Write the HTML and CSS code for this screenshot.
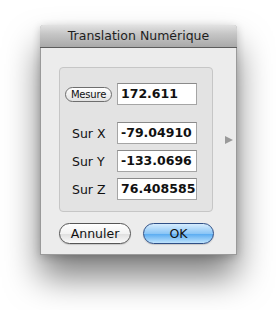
FILE: index.html
```html
<!DOCTYPE html>
<html lang="fr">

<head>
    <meta charset="UTF-8">
    <meta name="viewport" content="width=device-width, initial-scale=1.0">
    <title>Translation Numérique</title>
    <link rel="stylesheet" href="styles.css">
</head>

<body>

    <!-- Dialog window -->
    <div class="window">
        <div class="titlebar">Translation Numérique</div>

        <div class="content">
            <div class="panel-row">
                <!-- Values group -->
                <div class="group">
                    <div class="row">
                        <button class="small-btn">Mesure</button>
                        <div class="field">172.611</div>
                    </div>
                    <div class="row first-axis">
                        <span class="label">Sur X</span>
                        <div class="field">-79.04910</div>
                    </div>
                    <div class="row">
                        <span class="label">Sur Y</span>
                        <div class="field">-133.0696</div>
                    </div>
                    <div class="row">
                        <span class="label">Sur Z</span>
                        <div class="field">76.408585</div>
                    </div>
                </div>
                <span class="disclosure"></span>
            </div>

            <!-- Dialog buttons -->
            <div class="buttons">
                <button class="aqua-btn">Annuler</button>
                <button class="aqua-btn default">OK</button>
            </div>
        </div>
    </div>

</body>

</html>
```

FILE: styles.css
```css
/* Page */
html {
    background: #ffffff;
}

body {
    margin: 0;
    padding: 25px 0 55px 40px;
    font-family: "DejaVu Sans", "Liberation Sans", sans-serif;
    color: #111;
}

/* Window */
.window {
    box-sizing: border-box;
    width: 197px;
    height: 230px;
    background: #ececec;
    border: 1px solid #9a9a9a;
    border-top: none;
    border-radius: 4px 4px 0 0;
    box-shadow: 0 22px 34px rgba(0, 0, 0, 0.5), 0 2px 8px rgba(0, 0, 0, 0.2);
}

.titlebar {
    height: 22px;
    line-height: 22px;
    margin: 0 -1px;
    text-align: center;
    font-size: 12.5px;
    color: #1e1e1e;
    background: linear-gradient(#e2e2e2, #c6c6c6 40%, #a9a9a9);
    border-bottom: 1px solid #5c5c5c;
    border-radius: 4px 4px 0 0;
}

.content {
    padding: 19px 0 0 18px;
}

/* Group box with arrow */
.panel-row {
    display: flex;
    align-items: center;
}

.group {
    box-sizing: border-box;
    width: 154px;
    height: 145px;
    padding: 15px 0 0 5px;
    background: #e3e3e3;
    border: 1px solid #c6c6c6;
    border-radius: 4px;
}

.disclosure {
    margin-left: 12px;
    width: 0;
    height: 0;
    border-left: 8px solid #9a9a9a;
    border-top: 4.5px solid transparent;
    border-bottom: 4.5px solid transparent;
}

.row {
    display: grid;
    grid-template-columns: 52px 80px;
    align-items: center;
    margin-bottom: 6px;
}

.row.first-axis {
    margin-top: 17px;
}

.label {
    padding-left: 7px;
    font-size: 12.5px;
}

.field {
    box-sizing: border-box;
    height: 22px;
    line-height: 20px;
    padding-left: 3px;
    background: #ffffff;
    border: 1px solid #a5a5a5;
    border-top-color: #8a8a8a;
    font-size: 12.5px;
    font-weight: bold;
    white-space: nowrap;
    overflow: hidden;
}

/* Small rounded button */
.small-btn {
    box-sizing: border-box;
    width: 47px;
    height: 15px;
    padding: 0;
    font-family: inherit;
    font-size: 10px;
    line-height: 13px;
    letter-spacing: -0.2px;
    color: #111;
    background: linear-gradient(#ffffff, #f0f0f0 50%, #e2e2e2);
    border: 1px solid #6e6e6e;
    border-radius: 8px;
}

/* Dialog buttons */
.buttons {
    display: flex;
    gap: 12px;
    margin: 11px 0 0 0;
}

.aqua-btn {
    box-sizing: border-box;
    width: 72px;
    height: 21px;
    padding: 0;
    font-family: inherit;
    font-size: 12.5px;
    line-height: 19px;
    color: #111;
    background: linear-gradient(#ffffff, #f2f2f2 50%, #e0e0e0 55%, #fbfbfb);
    border: 1px solid #555;
    border-radius: 11px;
    box-shadow: 0 1px 1px rgba(0, 0, 0, 0.15);
}

.aqua-btn.default {
    width: 71px;
    background: linear-gradient(#d6ecfd, #8cc6f6 50%, #5eaef2 55%, #bfe3fc);
    border-color: #2f4f86;
}
```
